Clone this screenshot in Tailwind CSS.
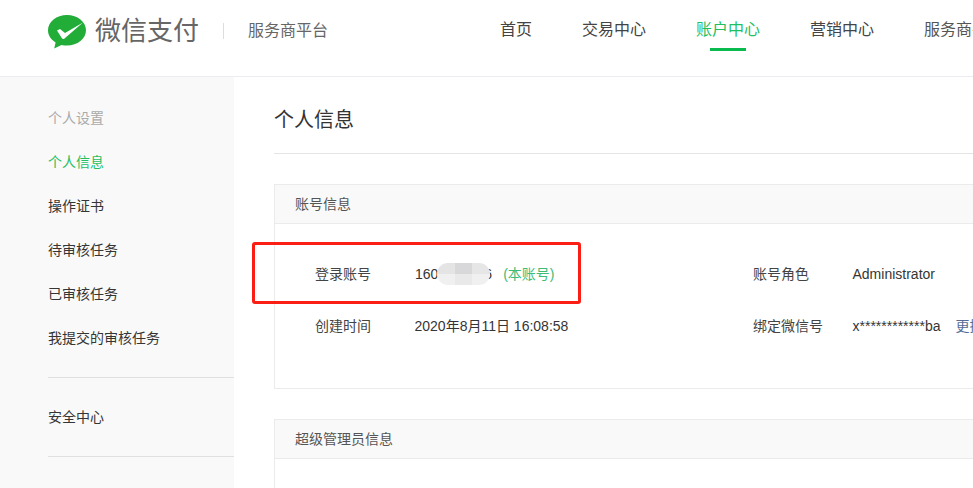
<!DOCTYPE html>
<html lang="zh"><head><meta charset="utf-8"><script src="https://cdn.jsdelivr.net/npm/@tailwindcss/browser@4"></script></head>
<body class="overflow-hidden">
<div class="relative w-[973px] h-[488px] overflow-hidden bg-white text-[#353535] text-sm font-['Liberation_Sans','Noto_Sans_CJK_SC',sans-serif]">
  <header class="h-[77px] border-b border-[#ebebf2] flex items-start">
    <div class="w-[470px] shrink-0 flex items-center h-[62px] pl-[48px]">
      <svg width="38" height="34" viewBox="0 0 38 34" class="shrink-0 mt-[1px]"><path d="M19 0C8.500 0 0 6.800 0 15.300c0 5 3 9.500 7.600 12.200L6.200 33.600l7.300-3.600c1.800.4 3.600.6 5.500.6 10.500 0 19-6.900 19-15.300C38 6.800 29.500 0 19 0z" fill="#22ac38"/><path d="M9 15.500L12 14l5 4L35 7.500 16.500 23.500c-1 .8-2 .6-2.600-.3z" fill="#fff"/></svg>
      <span class="ml-[9px] text-[26px] text-[#666] leading-none">微信支付</span>
      <span class="ml-[24px] w-px h-[16px] bg-[#ddd]"></span>
      <span class="ml-[24px] text-[16px] text-[#666]">服务商平台</span>
    </div>
    <nav class="flex text-[16px] pt-[19px] pl-[30px] whitespace-nowrap">
      <a class="w-[82px] text-[#444]">首页</a>
      <a class="w-[114px] text-[#444]">交易中心</a>
      <a class="w-[114px] relative text-[#1fbf62]">账户中心<span class="absolute left-[14px] top-[29px] w-[36px] h-[3px] bg-[#09bb4f]"></span></a>
      <a class="w-[114px] text-[#444]">营销中心</a>
      <a class="w-[114px] text-[#555]">服务商平台</a>
    </nav>
  </header>
  <div class="flex h-[411px]">
    <aside class="w-[234px] shrink-0 bg-[#f9f9f9] pl-[48px]">
      <ul class="pt-[19px] leading-[44px]">
        <li class="text-[#aaa]">个人设置</li>
        <li class="text-[#1fbf62]">个人信息</li>
        <li>操作证书</li>
        <li>待审核任务</li>
        <li>已审核任务</li>
        <li>我提交的审核任务</li>
      </ul>
      <div class="mt-[17px] border-t border-[#e0e0e0] h-[79px] flex items-center">安全中心</div>
      <div class="border-t border-[#e0e0e0]"></div>
    </aside>
    <main class="flex-1 pl-[40px] min-w-0">
      <h1 class="h-[77px] pt-[2px] leading-[82px] text-[20px] font-normal text-[#333] border-b border-[#e4e4e4] w-[800px]">个人信息</h1>
      <section class="mt-[30px] w-[800px] h-[205px] border border-[#ebebeb]">
        <div class="h-[39px] bg-[#f9f9f9] border-b border-[#ebebeb] pl-[20px] leading-[38px] text-[#555]">账号信息</div>
        <div class="grid grid-cols-[438px_1fr] pl-[40px] pt-[24px] leading-[52px] text-[#444]">
          <div class="flex"><span class="w-[100px]">登录账号</span><span class="text-[#353535]">160<span class="inline-block w-[46px]"></span>6</span><span class="ml-[11px] text-[#3dbb77]">(本账号)</span></div>
          <div class="flex"><span class="w-[99.5px]">账号角色</span><span class="text-[#353535]">Administrator</span></div>
          <div class="flex"><span class="w-[99.5px]">创建时间</span><span class="text-[#353535]">2020年8月11日 16:08:58</span></div>
          <div class="flex whitespace-nowrap"><span class="w-[99.5px]">绑定微信号</span><span class="text-[#353535]">x************ba</span><span class="ml-[15px] text-[#576b95]">更换</span></div>
        </div>
      </section>
      <section class="mt-[30px] w-[800px] h-[120px] border border-[#ebebeb]">
        <div class="h-[39px] bg-[#f9f9f9] border-b border-[#ebebeb] pl-[20px] leading-[38px] text-[#555]">超级管理员信息</div>
      </section>
    </main>
  </div>
  <div class="absolute left-[437px] top-[263px] w-[53px] h-[22px] rounded-[11px] overflow-hidden grid grid-cols-3 grid-rows-2">
    <span class="bg-[#e4e4e4]"></span><span class="bg-[#d8d8da]"></span><span class="bg-[#e6e6e6]"></span>
    <span class="bg-[#f0f0f0]"></span><span class="bg-[#e9e9e9]"></span><span class="bg-[#f0f0f0]"></span>
  </div>
  <div class="absolute left-[252px] top-[242px] w-[329px] h-[62px] border-[3px] border-[#fa1e14] rounded-[3px]"></div>
</div>
</body></html>
